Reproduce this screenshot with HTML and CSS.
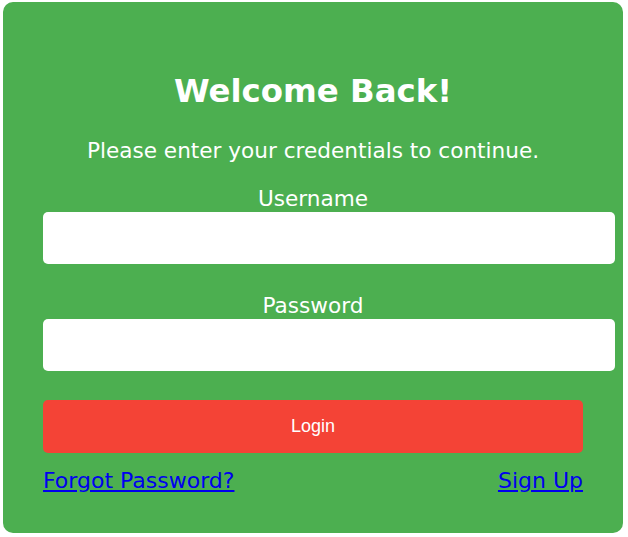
FILE: index.html
```html
<!DOCTYPE html>
<html lang="en">
<head>
<meta charset="utf-8">
<title>Login</title>
<link rel="stylesheet" href="styles.css">
</head>
<body>
  <div class="card">
    <h1 class="title">Welcome Back!</h1>
    <p class="subtitle">Please enter your credentials to continue.</p>
    <form class="form">
      <div class="group">
        <label class="label" for="username">Username</label>
        <input class="input" type="text" id="username">
      </div>
      <div class="group">
        <label class="label" for="password">Password</label>
        <input class="input" type="password" id="password">
      </div>
      <button class="button" type="button">Login</button>
    </form>
    <div class="links">
      <a class="link" href="#">Forgot Password?</a>
      <a class="link" href="#">Sign Up</a>
    </div>
  </div>
</body>
</html>
```
FILE: styles.css
```css
html, body {
  margin: 0;
  padding: 0;
  background: #ffffff;
}

body {
  padding: 2px 5px 0 3px;
  font-family: Verdana, "DejaVu Sans", sans-serif;
  font-size: 21.6px;
}

.card {
  width: 620px;
  box-sizing: border-box;
  padding: 40px;
  background: #4caf50;
  border-radius: 10px;
  color: #ffffff;
  text-align: center;
}

.title {
  margin: 30px 0 0;
  font-size: 32.4px;
  font-weight: bold;
  line-height: normal;
}

.subtitle {
  margin: 28px 0 0;
  line-height: normal;
}

.form {
  margin-top: 23px;
}

.group {
  margin-bottom: 29px;
}

.label {
  display: block;
  margin-bottom: 1px;
  line-height: normal;
}

.input {
  display: block;
  width: 100%;
  height: 52px;
  padding: 0 16px;
  border: none;
  border-radius: 5px;
  background: #ffffff;
  font: inherit;
  box-sizing: content-box;
  margin: 0;
  outline: none;
}

.button {
  display: block;
  width: 100%;
  height: 53px;
  border: none;
  border-radius: 5px;
  background: #f44336;
  color: #ffffff;
  font-family: "Liberation Sans", Arial, sans-serif;
  font-size: 18px;
  cursor: pointer;
  padding: 0;
}

.links {
  display: flex;
  justify-content: space-between;
  align-items: baseline;
  margin-top: 15px;
  line-height: normal;
}

.link {
  color: #0000ee;
  text-decoration: underline;
  font-size: 22px;
}
```
